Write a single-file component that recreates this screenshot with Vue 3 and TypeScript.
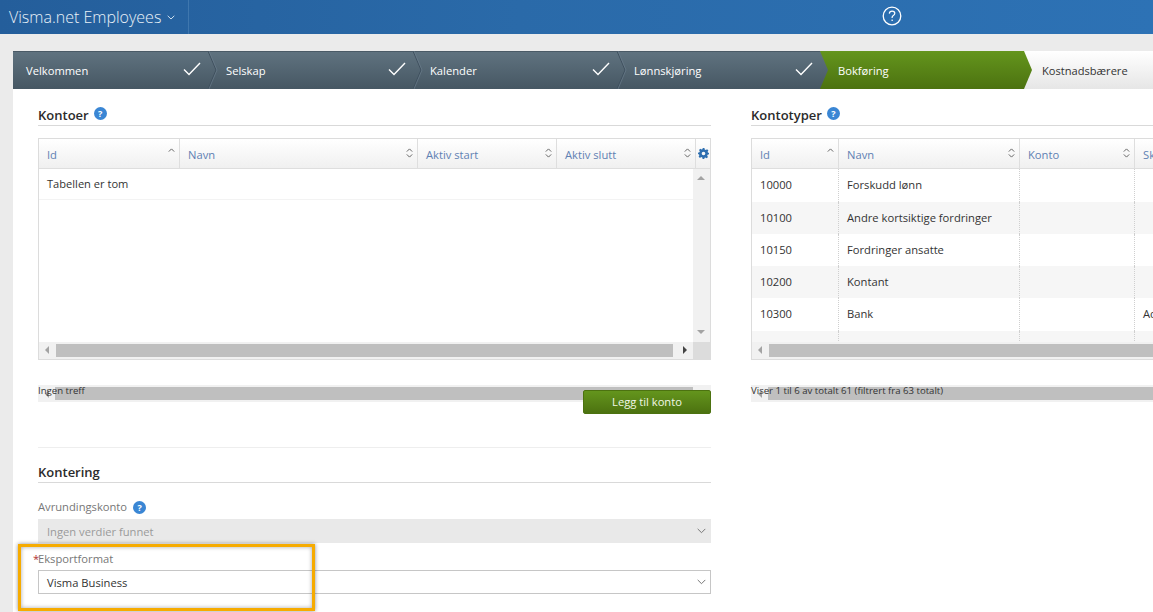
<script setup lang="ts">
interface Step { name: string; width: number; pad: number; state: 'done' | 'active' | 'todo' }
const steps: Step[] = [
  { name: 'Velkommen', width: 195, pad: 13, state: 'done' },
  { name: 'Selskap', width: 205, pad: 18, state: 'done' },
  { name: 'Kalender', width: 204, pad: 17, state: 'done' },
  { name: 'Lønnskjøring', width: 203, pad: 17, state: 'done' },
  { name: 'Bokføring', width: 204, pad: 18, state: 'active' },
  { name: 'Kostnadsbærere', width: 140, pad: 18, state: 'todo' },
]
const leftCols = [
  { name: 'Id', w: 141, sort: 'up' },
  { name: 'Navn', w: 238, sort: 'both' },
  { name: 'Aktiv start', w: 139, sort: 'both' },
  { name: 'Aktiv slutt', w: 139, sort: 'both' },
]
const rightCols = [
  { name: 'Id', w: 87, sort: 'up' },
  { name: 'Navn', w: 181, sort: 'both' },
  { name: 'Konto', w: 115, sort: 'both' },
  { name: 'Skatt', w: 120, sort: 'none' },
]
const rows = [
  { id: '10000', name: 'Forskudd lønn', extra: '', h: 33 },
  { id: '10100', name: 'Andre kortsiktige fordringer', extra: '', h: 32 },
  { id: '10150', name: 'Fordringer ansatte', extra: '', h: 32 },
  { id: '10200', name: 'Kontant', extra: '', h: 32 },
  { id: '10300', name: 'Bank', extra: 'Ad', h: 33 },
  { id: '', name: '', extra: '', h: 12 },
]
const rowHeight = (h: number) => ({ height: `${h}px` })
const colWidth = (w: number) => ({ width: `${w}px` })
</script>

<template>
  <div class="page">
    <header class="topbar">
      <div class="brand">
        <span class="brand-name">Visma.net Employees</span>
        <svg class="brand-caret" width="8" height="5" viewBox="0 0 8 5"><path d="M.7.8 4 4 7.3.8" fill="none" stroke="#cfe0f0" stroke-width="1" /></svg>
      </div>
      <svg class="help" width="20" height="20" viewBox="0 0 20 20">
        <circle cx="10" cy="10" r="8.8" fill="none" stroke="#fff" stroke-width="1.3" />
        <path d="M7.3 7.6c.1-1.6 1.2-2.5 2.8-2.5 1.6 0 2.7.9 2.7 2.2 0 1.1-.6 1.7-1.5 2.3-.8.5-1.2 1-1.2 2v.5" fill="none" stroke="#fff" stroke-width="1.2" />
        <rect x="9.5" y="13.6" width="1.3" height="1.4" fill="#fff" />
      </svg>
    </header>

    <nav class="stepper">
      <div
        v-for="(s, i) in steps"
        :key="s.name"
        class="step"
        :class="s.state"
        :style="{ width: s.width + 'px', paddingLeft: s.pad + 'px', zIndex: steps.length - i }"
      >
        <span>{{ s.name }}</span>
        <svg v-if="s.state === 'done'" class="check" width="18" height="14" viewBox="0 0 18 14">
          <path d="M1 7.6 6 12.6 17 1" fill="none" stroke="#fff" stroke-width="1.4" />
        </svg>
        <svg v-if="s.state === 'done' && i < 3" class="sep" width="10" height="38" viewBox="0 0 10 38">
          <path d="M0 0 8 19 0 38" fill="none" stroke="#3f505e" stroke-width="1" />
          <path d="M1 0 9 19 1 38" fill="none" stroke="#6f8290" stroke-width=".6" />
        </svg>
      </div>
    </nav>

    <main class="panel">
      <div class="columns">
        <section class="col col-left">
          <h2 class="heading">Kontoer <i class="q">?</i></h2>
          <div class="grid">
            <div class="ghead">
              <div v-for="c in leftCols" :key="c.name" class="th" :style="colWidth(c.w)">
                <span>{{ c.name }}</span>
                <svg class="sort" width="7" height="10" viewBox="0 0 7 10">
                  <path d="M.8 3.6 3.5.9 6.2 3.6" fill="none" stroke="#666" stroke-width="1" />
                  <path v-if="c.sort === 'both'" d="M.8 6.4 3.5 9.1 6.2 6.4" fill="none" stroke="#666" stroke-width="1" />
                </svg>
              </div>
              <div class="th-gear">
                <svg width="11" height="11" viewBox="0 0 24 24"><path fill="#2f6fb0" fill-rule="evenodd" d="M10 0h4l.7 3.3 2.3 1 2.9-1.8 2.8 2.8L21 8.100l.9 2.200L24 10.200v3.700l-3.100.8-.9 2.200 1.800 2.900-2.800 2.800-2.900-1.800-2.300 1L14 24h-4l-.7-3.200-2.300-1-2.900 1.800-2.800-2.800L3 15.900l-.9-2.200L0 13.900v-3.700l3.100-.8.900-2.200-1.800-2.900L5 1.500l2.900 1.800 2.300-1zM12 8a4 4 0 1 0 0 8 4 4 0 0 0 0-8z" /></svg>
              </div>
            </div>
            <div class="gbody">
              <div class="gmain">
                <div class="empty">Tabellen er tom</div>
              </div>
              <div class="vscroll">
                <i class="tri tri-up"></i>
                <i class="tri tri-down"></i>
              </div>
            </div>
            <div class="hscroll">
              <i class="tri tri-left"></i>
              <div class="thumb thumb-left"></div>
              <i class="tri tri-right"></i>
              <div class="corner"></div>
            </div>
          </div>
          <div class="ghost">
            <i class="tri tri-left ghost-arrow"></i>
            <div class="ghost-thumb"></div>
            <span class="ghost-text">Ingen treff</span>
            <button class="add" type="button">Legg til konto</button>
          </div>
        </section>

        <section class="col col-right">
          <h2 class="heading">Kontotyper <i class="q">?</i></h2>
          <div class="grid grid-open">
            <div class="ghead">
              <div v-for="c in rightCols" :key="c.name" class="th" :style="colWidth(c.w)">
                <span>{{ c.name }}</span>
                <svg v-if="c.sort !== 'none'" class="sort" width="7" height="10" viewBox="0 0 7 10">
                  <path d="M.8 3.6 3.5.9 6.2 3.6" fill="none" stroke="#666" stroke-width="1" />
                  <path v-if="c.sort === 'both'" d="M.8 6.4 3.5 9.1 6.2 6.4" fill="none" stroke="#666" stroke-width="1" />
                </svg>
              </div>
            </div>
            <div class="rows">
              <div v-for="(r, ri) in rows" :key="ri" class="tr" :class="{ alt: ri % 2 === 1 }" :style="rowHeight(r.h)">
                <div class="td" :style="colWidth(87)">{{ r.id }}</div>
                <div class="td" :style="colWidth(181)">{{ r.name }}</div>
                <div class="td" :style="colWidth(115)"></div>
                <div class="td td-last" :style="colWidth(120)">{{ r.extra }}</div>
              </div>
            </div>
            <div class="hscroll">
              <i class="tri tri-left"></i>
              <div class="thumb thumb-right"></div>
            </div>
          </div>
          <div class="ghost ghost-right">
            <i class="tri tri-left ghost-arrow"></i>
            <div class="ghost-thumb"></div>
            <span class="ghost-text">Viser 1 til 6 av totalt 61 (filtrert fra 63 totalt)</span>
          </div>
        </section>
      </div>

      <div class="rule"></div>

      <section class="form">
        <h2 class="heading">Kontering</h2>
        <label class="label label-first">Avrundingskonto <i class="q">?</i></label>
        <div class="select disabled">
          <span>Ingen verdier funnet</span>
          <svg width="9" height="6" viewBox="0 0 9 6"><path d="M.7.9 4.500 4.700 8.300.9" fill="none" stroke="#777" stroke-width="1" /></svg>
        </div>
        <label class="label label-second"><em>*</em>Eksportformat</label>
        <div class="select select-last">
          <span>Visma Business</span>
          <svg width="9" height="6" viewBox="0 0 9 6"><path d="M.7.9 4.500 4.700 8.300.9" fill="none" stroke="#777" stroke-width="1" /></svg>
        </div>
        <div class="highlight"></div>
      </section>
    </main>
  </div>
</template>

<style>
html, body { margin: 0; height: 100%; overflow: hidden; background: #ebebeb; }
</style>

<style scoped>
.page {
  width: 1153px;
  height: 612px;
  overflow: hidden;
  background: #ebebeb;
  font-family: "Open Sans", "Liberation Sans", sans-serif;
  font-size: 11.2px;
  color: #333;
  display: flex;
  flex-direction: column;
}
.topbar {
  height: 34px;
  flex: none;
  position: relative;
  display: flex;
  align-items: center;
  background: linear-gradient(90deg, #245e9b 0%, #2a6aa9 45%, #2d72b5 100%);
}
.brand {
  width: 189px;
  height: 34px;
  box-sizing: border-box;
  padding: 0 0 1px 9px;
  display: flex;
  align-items: center;
  gap: 6px;
  border-right: 1px solid #3f77ae;
  color: #e9f1f8;
}
.brand-name { font-size: 16px; font-weight: 300; white-space: nowrap; }
.brand-caret { margin-top: 1px; }
.help { position: absolute; left: 882px; top: 6px; }

.stepper {
  flex: none;
  height: 38px;
  margin: 17px 0 0 13px;
  display: flex;
}
.step {
  flex: none;
  position: relative;
  box-sizing: border-box;
  height: 38px;
  display: flex;
  align-items: center;
  font-size: 11.2px;
  font-weight: 500;
  white-space: nowrap;
}
.step::after {
  content: "";
  position: absolute;
  top: 0;
  left: 100%;
  width: 8px;
  height: 100%;
  background: inherit;
  clip-path: polygon(0 0, 100% 50%, 0 100%);
}
.step.done {
  color: #fff;
  background: linear-gradient(180deg, #607380 0%, #465763 100%);
  box-shadow: inset 0 1px 0 #4a5a66;
}
.step.active {
  color: #fff;
  background: linear-gradient(180deg, #64951d 0%, #4c7210 100%);
}
.step.todo {
  color: #333;
  font-weight: 400;
  font-size: 11.1px;
  width: auto;
  flex: 1;
  background: linear-gradient(180deg, #fff 0%, #e6e6e6 100%);
}
.step.todo::after { display: none; }
.check { position: absolute; right: 7px; top: 11px; }
.sep { position: absolute; left: 100%; top: 0; z-index: 3; }

.panel {
  flex: 1;
  margin-left: 13px;
  background: #fff;
  padding: 0 0 0 25px;
  min-height: 0;
  position: relative;
}
.columns { display: flex; gap: 40px; }
.col { flex: none; position: relative; }
.col-left { width: 673px; }
.col-right { width: 420px; }
.heading {
  margin: 0;
  height: 37px;
  box-sizing: border-box;
  padding-top: 17px;
  font-size: 13px;
  line-height: 18px;
  font-weight: 600;
  color: #2b2b2b;
  border-bottom: 1px solid #d9d9d9;
  display: flex;
  align-items: flex-start;
  gap: 5px;
  white-space: nowrap;
}
.col .heading { margin-bottom: 12px; }
.q {
  display: inline-block;
  width: 13px;
  height: 13px;
  border-radius: 50%;
  background: #3a86d4;
  color: #fff;
  font-style: normal;
  font-weight: 700;
  font-size: 9px;
  line-height: 13px;
  text-align: center;
}
.heading .q { margin-top: 1px; }
.grid {
  border: 1px solid #dcdcdc;
  height: 222px;
  box-sizing: border-box;
  display: flex;
  flex-direction: column;
  background: #fff;
}
.grid-open { border-right: 0; }
.ghead {
  height: 30px;
  flex: none;
  display: flex;
  border-bottom: 1px solid #dedede;
  box-sizing: border-box;
  background: linear-gradient(180deg, #fff 0%, #f0f0f0 100%);
}
.th {
  flex: none;
  box-sizing: border-box;
  position: relative;
  padding: 1px 0 0 8px;
  line-height: 30px;
  color: #5f81b3;
  border-right: 1px solid #dedede;
  white-space: nowrap;
}
.sort { position: absolute; right: 4px; top: 9px; }
.th:first-child .sort { right: 4px; top: 9px; }
.th-gear { flex: 1; position: relative; }
.th-gear svg { position: absolute; left: 2px; top: 9px; }
.gbody { flex: 1; display: flex; min-height: 0; }
.gmain { flex: 1; }
.empty {
  height: 31px;
  box-sizing: border-box;
  padding-left: 8px;
  font-size: 11.1px;
  line-height: 30px;
  border-bottom: 1px solid #f3f3f3;
}
.vscroll {
  width: 17px;
  flex: none;
  background: #f1f1f1;
  position: relative;
}
.hscroll {
  height: 17px;
  flex: none;
  background: #f1f1f1;
  position: relative;
  overflow: hidden;
}
.thumb {
  position: absolute;
  top: 2px;
  height: 13px;
  background: #bfbfbf;
}
.thumb-left { left: 17px; width: 617px; }
.thumb-right { left: 17px; width: 420px; }
.corner {
  position: absolute;
  right: 0;
  top: 0;
  width: 17px;
  height: 17px;
  background: #dcdcdc;
}
.tri { position: absolute; width: 0; height: 0; border-style: solid; display: block; }
.tri-up { left: 4px; top: 7px; border-width: 0 4px 4px; border-color: transparent transparent #a3a3a3; }
.tri-down { left: 4px; bottom: 8px; border-width: 4px 4px 0; border-color: #a3a3a3 transparent transparent; }
.tri-left { left: 6px; top: 4px; border-width: 4px 4px 4px 0; border-color: transparent #a3a3a3 transparent transparent; }
.tri-right { right: 23px; top: 4px; border-width: 4px 0 4px 4px; border-color: transparent transparent transparent #444; }

.rows { flex: 1; min-height: 0; }
.tr { display: flex; }
.tr.alt { background: #f6f6f6; }
.td {
  flex: none;
  box-sizing: border-box;
  padding: 0 0 2px 8px;
  display: flex;
  align-items: center;
  border-right: 1px dotted #cfcfcf;
  white-space: nowrap;
  overflow: hidden;
}
.td-last { border-right: 0; }

.ghost {
  height: 17px;
  margin-top: 25px;
  background: #f1f1f1;
  position: relative;
  width: 673px;
}
.ghost-thumb {
  position: absolute;
  left: 17px;
  right: 18px;
  top: 2px;
  height: 13px;
  background: #bfbfbf;
}
.ghost-right .ghost-thumb { right: 0; }
.ghost-arrow { top: 5px; left: 7px; }
.ghost-text {
  position: absolute;
  left: 0;
  top: 0;
  font-size: 9.6px;
  line-height: 12px;
  white-space: nowrap;
  color: #333;
}
.add {
  position: absolute;
  right: 0;
  top: 5px;
  width: 128px;
  height: 24px;
  padding: 0 0 1px;
  border: 1px solid #4c7210;
  border-radius: 2px;
  background: linear-gradient(180deg, #64951d 0%, #4c7210 100%);
  color: #f1f7e6;
  font: 500 11.2px "Open Sans", sans-serif;
}
.rule {
  width: 673px;
  height: 1px;
  margin-top: 45px;
  background: #eeeeee;
}
.form { width: 673px; position: relative; }
.form .heading { height: 35px; padding-top: 15px; }
.label {
  display: flex;
  align-items: center;
  gap: 6px;
  line-height: 14px;
  color: #777;
}
.label-first { margin-top: 17px; height: 14px; }
.label-second { margin-top: 9px; gap: 0; position: relative; }
.label-second em {
  position: absolute;
  left: -5px;
  top: 0;
  color: #b03030;
  font-style: normal;
}
.select {
  height: 24px;
  margin-top: 5px;
  box-sizing: border-box;
  padding: 0 4px 0 8px;
  display: flex;
  align-items: center;
  justify-content: space-between;
  border: 1px solid #c6c6c6;
  background: #fff;
  color: #333;
}
.select-last { margin-top: 4px; }
.select.disabled {
  background: #e9e9e9;
  border-color: #e9e9e9;
  color: #9a9a9a;
}
.highlight {
  position: absolute;
  left: -20px;
  top: 96px;
  width: 297px;
  height: 67px;
  box-sizing: border-box;
  border: 3px solid #f6ab00;
  box-shadow: 0 0 4px rgba(0, 0, 0, .45), inset 0 0 4px rgba(0, 0, 0, .35);
  pointer-events: none;
}
</style>
